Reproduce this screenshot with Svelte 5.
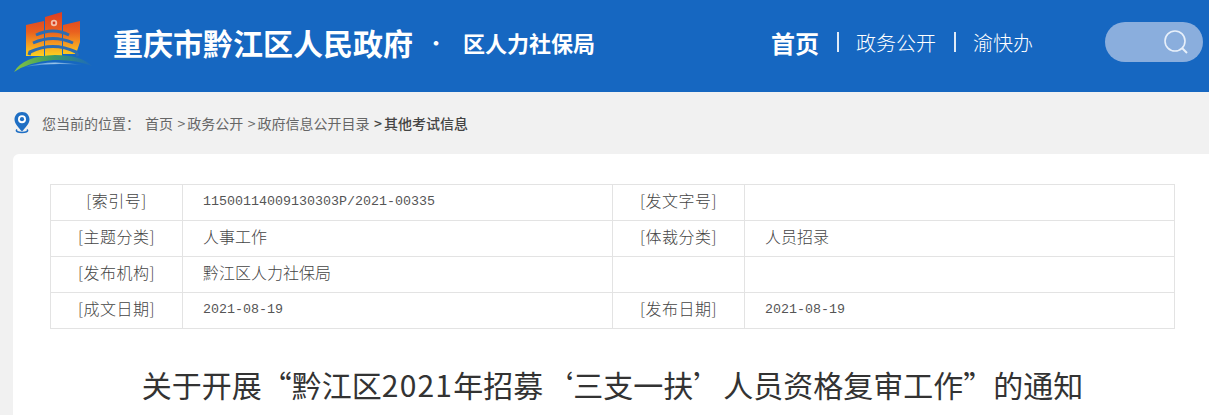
<script>
    const rows = [
        ["[索引号]", "11500114009130303P/2021-00335", "[发文字号]", ""],
        ["[主题分类]", "人事工作", "[体裁分类]", "人员招录"],
        ["[发布机构]", "黔江区人力社保局", "", ""],
        ["[成文日期]", "2021-08-19", "[发布日期]", "2021-08-19"]
    ];
    const crumbs = ["政务公开", "政府信息公开目录"];

    // ascii values are set in the mono face, the rest stays in the cjk face
    const isLatin = (s) => /^[\x00-\x7f]+$/.test(s);
</script>

<div class="page">
    <header class="top">
        <svg class="logo" viewBox="0 0 80 62" width="80" height="62" aria-hidden="true">
            <defs>
                <linearGradient id="wall" gradientUnits="userSpaceOnUse" x1="0" y1="0" x2="0" y2="44">
                    <stop offset="0" stop-color="#dd3d22" />
                    <stop offset="0.45" stop-color="#e9601f" />
                    <stop offset="0.75" stop-color="#f5a021" />
                    <stop offset="1" stop-color="#fbd021" />
                </linearGradient>
                <linearGradient id="arc" x1="0" y1="0" x2="1" y2="0">
                    <stop offset="0" stop-color="#86c440" />
                    <stop offset="0.45" stop-color="#3f9f5f" />
                    <stop offset="1" stop-color="#1c69bd" />
                </linearGradient>
                <linearGradient id="glow" x1="0" y1="0" x2="1" y2="0">
                    <stop offset="0" stop-color="#2a7cc8" />
                    <stop offset="0.5" stop-color="#9cc6ea" />
                    <stop offset="1" stop-color="#1c69bd" />
                </linearGradient>
            </defs>
            <path d="M13 13 L31 9 V44 H13 Z M32 5 L49 0 V44 H32 Z M50 13 L67 9 V30 L63 42 H50 Z" fill="url(#wall)" />
            <circle cx="41" cy="11" r="3.2" fill="#f3c0a8" />
            <circle cx="41" cy="11" r="1.4" fill="#d83a20" />
            <g fill="none" stroke="#2c6cb2">
                <path d="M23 23 Q40 15 56 23" stroke-width="3" />
                <path d="M20 31 Q40 22 60 31" stroke-width="3" />
                <path d="M16 43 L17 40 Q40 29 63 40 L65 44" stroke-width="3.2" />
            </g>
            <path d="M1 60 Q10 44 42 43 Q68 43 79 54 Q62 47 40 48 Q16 50 1 60 Z" fill="url(#arc)" />
            <path d="M12 55 Q36 47 70 53 Q38 50 12 55 Z" fill="url(#glow)" />
        </svg>
        <div class="site">重庆市黔江区人民政府</div>
        <span class="dot">•</span>
        <div class="dept">区人力社保局</div>
        <nav class="nav">
            <a class="home" href="#top">首页</a>
            <span class="sep"></span>
            <a href="#top">政务公开</a>
            <span class="sep"></span>
            <a href="#top">渝快办</a>
        </nav>
        <div class="search">
            <svg viewBox="0 0 26 26" width="26" height="26" fill="none" stroke="#e8f0fa" aria-hidden="true">
                <circle cx="12" cy="12" r="10" stroke-width="1.6" />
                <path d="M19 19 L24 24" stroke-width="2" />
            </svg>
        </div>
    </header>

    <div class="crumbs">
        <svg viewBox="0 0 18 24" width="18" height="24" aria-hidden="true">
            <path d="M9 1 C4.2 1 1.5 4.6 1.5 8.4 C1.5 12.6 6 17 9 20.5 C12 17 16.5 12.6 16.5 8.4 C16.5 4.6 13.8 1 9 1 Z" fill="#1f6fc4" />
            <circle cx="9" cy="8.2" r="4" fill="#fff" />
            <circle cx="9" cy="8.2" r="2.1" fill="#1f6fc4" />
            <path d="M4 18.5 C0 22.5 18 22.5 14 18.5" fill="none" stroke="#1f6fc4" stroke-width="1.6" />
        </svg>
        <span class="here">您当前的位置：</span>
        <span class="first">首页</span>
        {#each crumbs as c}
            <span><i class="gt">&gt;</i>{c}</span>
        {/each}
        <span class="current"><i class="gt">&gt;</i>其他考试信息</span>
    </div>

    <main class="card">
        <table class="meta">
            <tbody>
                {#each rows as r}
                    <tr>
                        <td class="label">{r[0]}</td>
                        <td class="value" class:latin={isLatin(r[1])}>{r[1]}</td>
                        <td class="label">{r[2]}</td>
                        <td class="value" class:latin={isLatin(r[3])}>{r[3]}</td>
                    </tr>
                {/each}
            </tbody>
        </table>
        <h1>关于开展“黔江区<span class="year">2021</span>年招募‘三支一扶’人员资格复审工作”的通知</h1>
    </main>
</div>

<style>
    :global(body) {
        margin: 0;
        overflow: hidden;
    }

    .page {
        width: 1209px;
        height: 415px;
        overflow: hidden;
        background: #f1f1f1;
        font-family: "Noto Sans CJK SC", "Liberation Sans", sans-serif;
    }

    .top {
        height: 92px;
        background: #1667c1;
        color: #fff;
        display: flex;
        align-items: center;
        padding: 0 0 8px 13px;
        box-sizing: border-box;
    }

    .logo {
        margin-right: 20px;
        margin-top: 2px;
    }

    .site {
        font-size: 30px;
        font-weight: 700;
        width: 300px;
        white-space: nowrap;
    }

    .dot {
        font-size: 18px;
        font-weight: 700;
        margin-left: 14px;
        width: 36px;
    }

    .dept {
        font-size: 22px;
        font-weight: 700;
        width: 132px;
        white-space: nowrap;
    }

    .nav {
        margin-left: 176px;
        width: 334px;
        display: flex;
        align-items: center;
        font-size: 20px;
    }

    .nav a {
        color: #fff;
        text-decoration: none;
        font-weight: 300;
    }

    .nav .home {
        font-size: 24px;
        font-weight: 700;
    }

    .sep {
        width: 2px;
        height: 20px;
        background: #dfeaf7;
        margin: 0 17.5px;
    }

    .search {
        width: 98px;
        height: 40px;
        border-radius: 20px;
        background: #8aaedd;
        display: flex;
        align-items: center;
        justify-content: flex-end;
        padding-right: 14px;
        box-sizing: border-box;
    }

    .crumbs {
        height: 62px;
        display: flex;
        align-items: center;
        padding-left: 13px;
        font-size: 14px;
        color: #666;
        box-sizing: border-box;
    }

    .crumbs span {
        margin-right: 4.5px;
        white-space: nowrap;
    }

    .crumbs .here {
        margin-left: 11px;
        margin-right: 5px;
    }

    .gt {
        font-style: normal;
        margin-right: 2px;
    }

    .crumbs .current {
        color: #444;
        font-weight: 500;
    }

    .card {
        margin-left: 13px;
        height: 270px;
        background: #fff;
        border-radius: 6px 0 0 0;
        padding: 30px 34px 0 37px;
        box-sizing: border-box;
    }

    .meta {
        width: 1125px;
        border-collapse: collapse;
        table-layout: fixed;
        color: #444;
        font-size: 16px;
        font-weight: 300;
    }

    .meta td {
        height: 36px;
        padding: 0 0 6px;
        border: 1px solid #e3e3e3;
        box-sizing: border-box;
    }

    .meta td:nth-child(1), .meta td:nth-child(3) {
        width: 132px;
    }

    .meta td:nth-child(2) {
        width: 430px;
    }

    .label {
        text-align: center;
        letter-spacing: 0.5px;
    }

    .meta td.value {
        padding-left: 20px;
    }

    .meta td.latin {
        padding-bottom: 2px;
        font-family: "Liberation Mono", monospace;
        font-size: 13.33px;
        color: #555;
    }

    h1 {
        margin: 20px 0 0;
        text-align: center;
        font-size: 30px;
        font-weight: 400;
        line-height: 70px;
        color: #333;
        white-space: nowrap;
    }

    .year {
        letter-spacing: 1.2px;
    }
</style>
